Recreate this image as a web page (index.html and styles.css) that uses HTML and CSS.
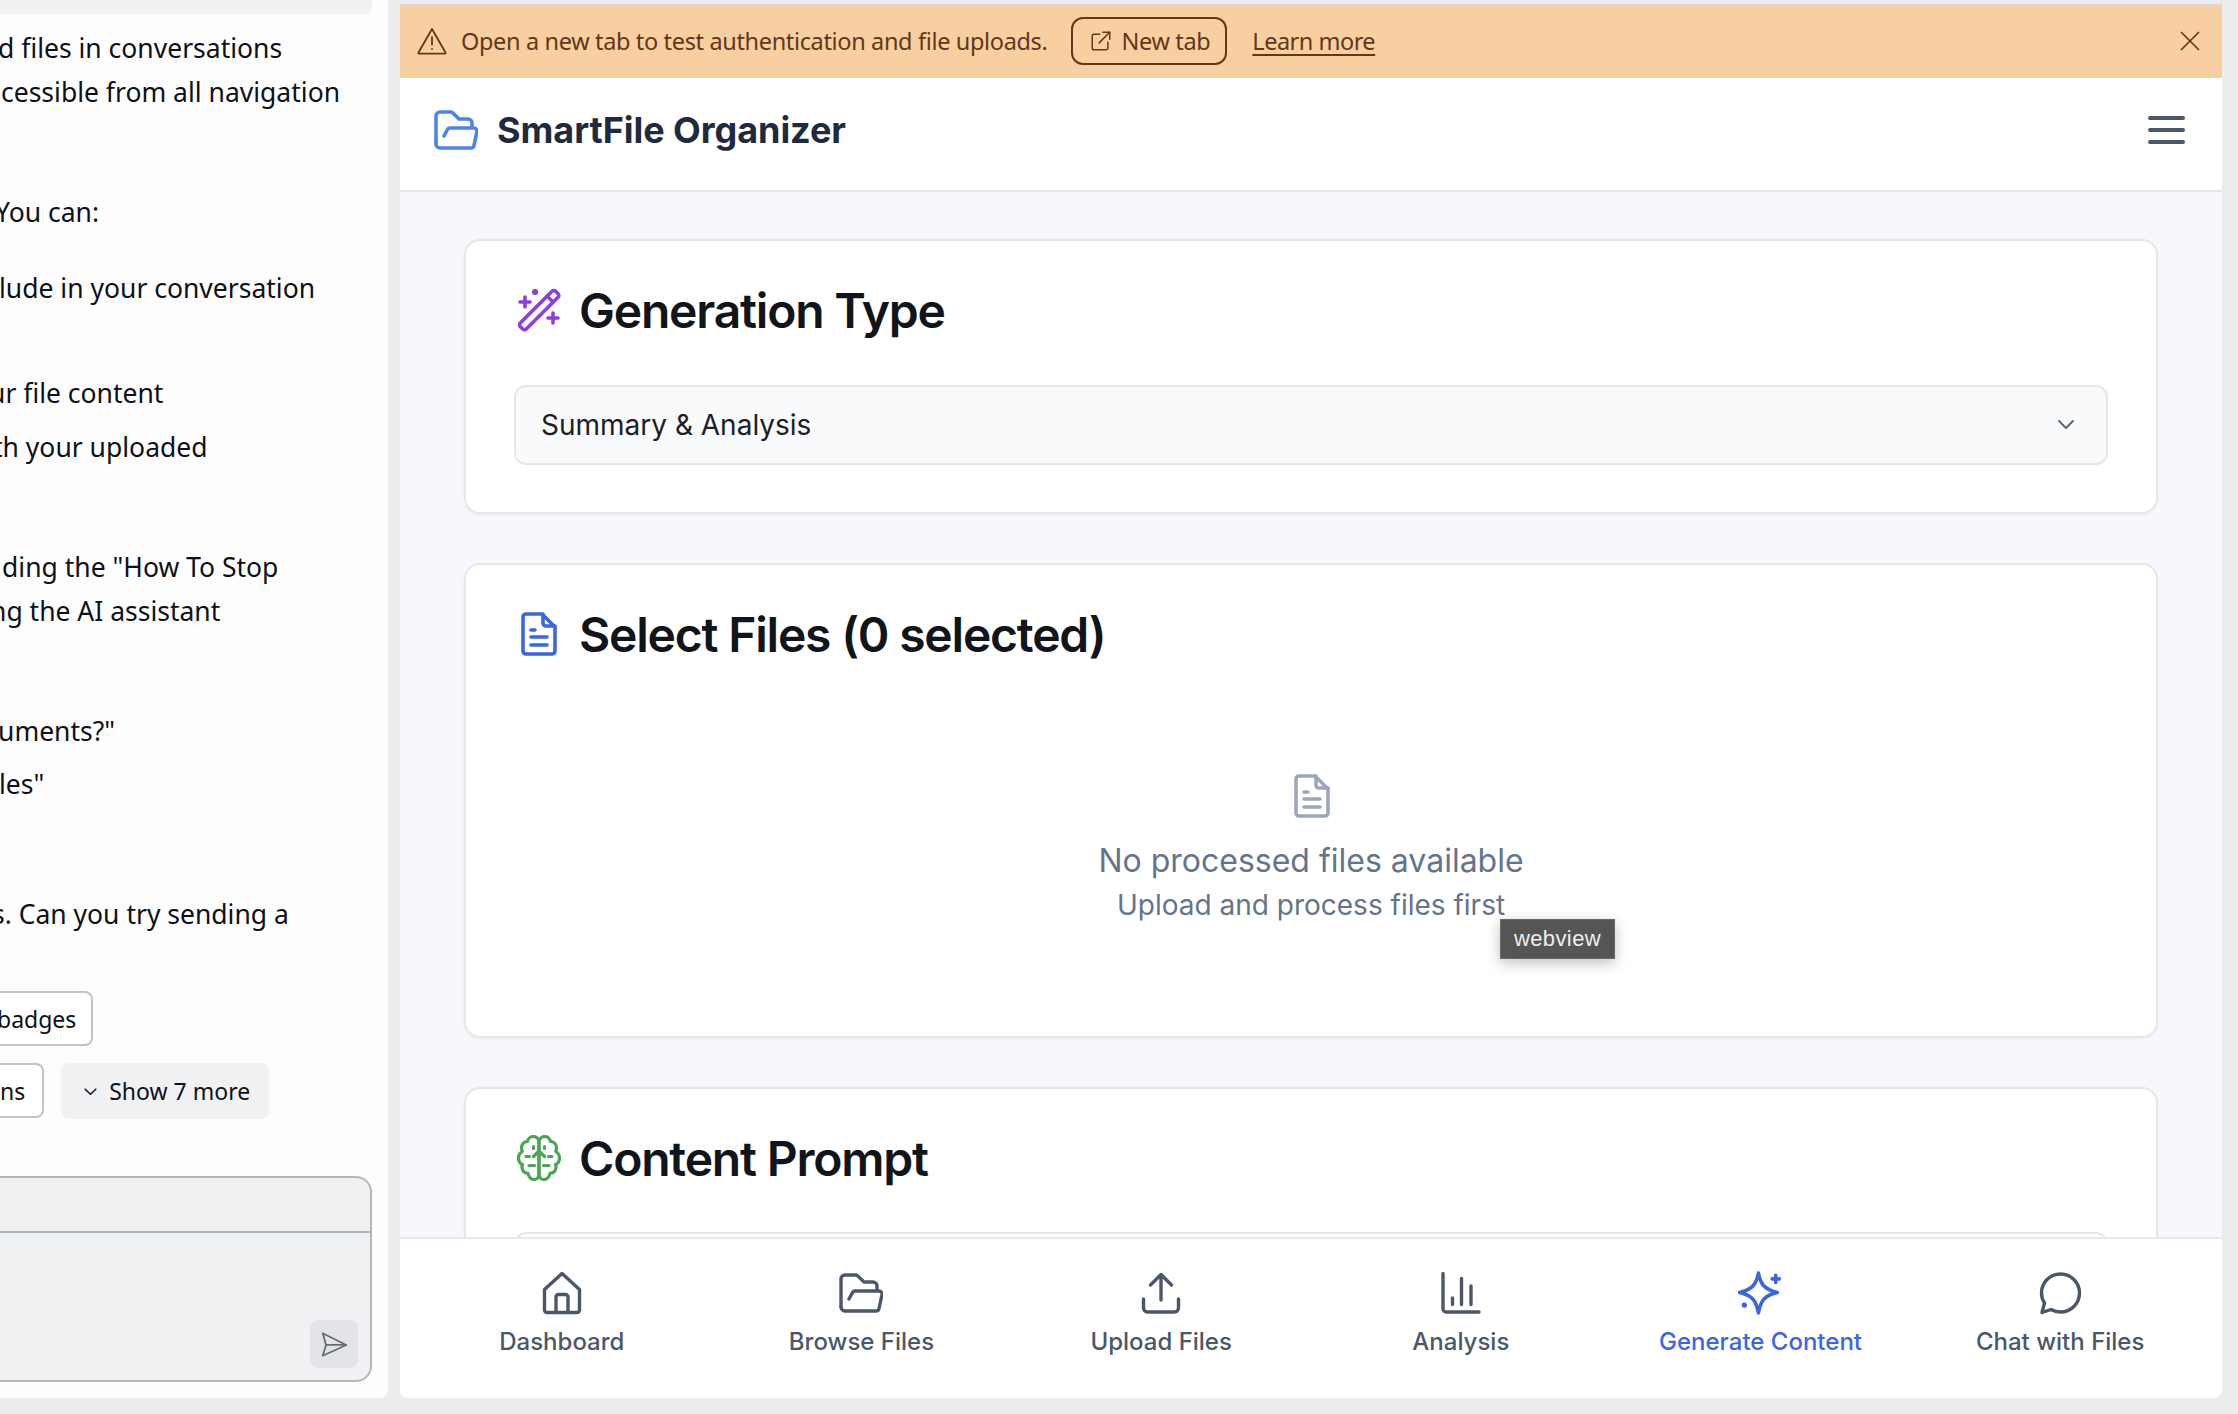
FILE: index.html
```html
<!DOCTYPE html>
<html lang="en">
<head>
<meta charset="utf-8">
<title>SmartFile Organizer</title>
<link rel="stylesheet" href="styles.css">
</head>
<body>
<div class="app">
  <aside class="assistant">
    <div class="top-strip"></div>
    <p class="line l1">d files in conversations</p>
    <p class="line l2">cessible from all navigation</p>
    <p class="line l3">You can:</p>
    <p class="line l4">lude in your conversation</p>
    <p class="line l5">ur file content</p>
    <p class="line l6">th your uploaded</p>
    <p class="line l7">ding the "How To Stop</p>
    <p class="line l8">ng the AI assistant</p>
    <p class="line l9">uments?"</p>
    <p class="line l10">les"</p>
    <p class="line l11">s. Can you try sending a</p>
    <div class="chip-row r1"><span class="chip">badges</span></div>
    <div class="chip-row r2">
      <span class="chip">ns</span>
      <span class="more">
        <svg class="more-icon" viewBox="0 0 16 16" fill="none" stroke="currentColor" stroke-width="1.4" stroke-linecap="round" stroke-linejoin="round"><path d="M3 5.8 8 10.6l5-4.8"/></svg>
        Show 7 more
      </span>
    </div>
    <div class="composer">
      <div class="composer-head"></div>
      <div class="composer-body">
        <span class="send">
          <svg viewBox="0 0 32 32" fill="none" stroke="currentColor" stroke-width="1.9" stroke-linejoin="round" stroke-linecap="round"><path d="M4 4.5 29 17 4 28.5 7.5 17Z"/><path d="M7.5 17H29"/></svg>
        </span>
      </div>
    </div>
  </aside>

  <main class="preview">
    <div class="banner">
      <svg class="warn" viewBox="0 0 30 28" fill="none" stroke="currentColor" stroke-width="1.8" stroke-linecap="round" stroke-linejoin="round"><path d="M15 2 28.5 25.500a.8.8 0 0 1-.7 1.200H2.200a.8.8 0 0 1-.7-1.200Z"/><path d="M15 10v7.500"/><path d="M15 22v.1"/></svg>
      <span class="banner-text">Open a new tab to test authentication and file uploads.</span>
      <span class="newtab">
        <svg viewBox="2 2 16 16" fill="none" stroke="currentColor" stroke-width="1.2" stroke-linecap="round" stroke-linejoin="round"><path d="M9 4.5H4.5A1.5 1.5 0 0 0 3 6v9.5A1.5 1.5 0 0 0 4.5 17H14a1.5 1.5 0 0 0 1.5-1.5V11"/><path d="M11.5 3H17v5.500"/><path d="M17 3 8.500 11.500"/></svg>
        New tab
      </span>
      <a class="learn">Learn more</a>
      <svg class="close" viewBox="0 0 20 20" fill="none" stroke="currentColor" stroke-width="1.7" stroke-linecap="round"><path d="M1.5 1.5 18.5 18.5M18.5 1.5 1.500 18.5"/></svg>
    </div>

    <header class="topbar">
      <div class="brand">
        <svg class="brand-icon" viewBox="0 -3 44 44" fill="none" stroke="currentColor" stroke-width="3.6" stroke-linecap="round" stroke-linejoin="round"><path d="M2 33V5a4 4 0 0 1 4-4h10.5a3 3 0 0 1 2.200.9L25 8h9a4 4 0 0 1 4 4v4"/><path d="M10 25l3.500-6.500a3 3 0 0 1 2.800-1.500H40a3 3 0 0 1 3 3.500l-3 14A3 3 0 0 1 37 37H6a4 4 0 0 1-4-4"/></svg>
        <span class="brand-name">SmartFile Organizer</span>
      </div>
      <svg class="burger" viewBox="0 0 37 28" fill="none" stroke="currentColor" stroke-width="4" stroke-linecap="round"><path d="M2 2h33M2 14h33M2 26h33"/></svg>
    </header>

    <div class="content">
      <section class="card card-gen">
        <h2 class="card-title">
          <svg class="title-icon purple" viewBox="0 0 44 44" fill="none" stroke="currentColor" stroke-width="3.6" stroke-linecap="round" stroke-linejoin="round"><rect x="-3" y="18" width="50" height="8.500" rx="2.500" transform="rotate(-45 22 22)"/><path d="m30 8 6 6"/><path d="M3 14h10M8 9v10M31 30h10M36 25v10"/><path stroke-width="6" d="M18 4h.1"/></svg>
          Generation Type
        </h2>
        <div class="select">
          <span>Summary &amp; Analysis</span>
          <svg class="chevron" viewBox="0 0 20 20" fill="none" stroke="currentColor" stroke-width="1.8" stroke-linecap="round" stroke-linejoin="round"><path d="m3 6 7 7 7-7"/></svg>
        </div>
      </section>

      <section class="card card-files">
        <h2 class="card-title">
          <svg class="title-icon blue" viewBox="-4 0 44 44" fill="none" stroke="currentColor" stroke-width="3.6" stroke-linecap="round" stroke-linejoin="round"><path d="M21 2H5A3 3 0 0 0 2 5v34a3 3 0 0 0 3 3h26a3 3 0 0 0 3-3V15Z"/><path d="M22 2v9a3 3 0 0 0 3 3h9"/><path d="M10 18h4M10 25h16M10 33h16"/></svg>
          Select Files (0 selected)
        </h2>
        <div class="empty">
          <svg class="empty-icon" viewBox="0 0 36 44" fill="none" stroke="currentColor" stroke-width="3.6" stroke-linecap="round" stroke-linejoin="round"><path d="M21 2H5A3 3 0 0 0 2 5v34a3 3 0 0 0 3 3h26a3 3 0 0 0 3-3V15Z"/><path d="M22 2v9a3 3 0 0 0 3 3h9"/><path d="M10 18h4M10 25h16M10 33h16"/></svg>
          <p class="empty-main">No processed files available</p>
          <p class="empty-sub">Upload and process files first</p>
        </div>
      </section>

      <section class="card card-prompt">
        <h2 class="card-title">
          <svg class="title-icon green" viewBox="0 0 44 46" fill="none" stroke="currentColor" stroke-width="3.200" stroke-linecap="round" stroke-linejoin="round">
            <g id="brain-half"><path d="M22 7c0-3-2.500-5.500-5.500-5.500-3 0-5.500 2-6 5-3.500 0-6 3-6 6.500 0 1.300.3 2.300.8 3.300C2.800 18 1.500 20.300 1.500 23c0 3 1.500 5.500 4 6.700-.5 1-.7 2-.5 3.100.5 3.400 3 5.500 6 5.500.5 3.500 3 6.200 6 6.200 3 0 5-2.500 5-5.500Z"/><path d="M22 16l-5.500 5.500M9 21.500h3.500M16.500 11.500v2M12 30.500h5.500"/></g>
            <use href="#brain-half" transform="matrix(-1 0 0 1 44 0)"/>
          </svg>
          Content Prompt
        </h2>
        <div class="prompt-box"></div>
      </section>
    </div>

    <nav class="bottom-nav">
      <div class="nav-item">
        <svg viewBox="0 0 44 44" fill="none" stroke="currentColor" stroke-width="3.4" stroke-linecap="round" stroke-linejoin="round"><path d="M4.500 18.500 22 2.500l17.500 16V39a2.500 2.500 0 0 1-2.500 2.500H7A2.500 2.500 0 0 1 4.500 39Z"/><path d="M16 41V26a2.500 2.500 0 0 1 2.500-2.500h7A2.500 2.500 0 0 1 28 26v15"/></svg>
        <span>Dashboard</span>
      </div>
      <div class="nav-item">
        <svg viewBox="0 -3 44 44" fill="none" stroke="currentColor" stroke-width="3.4" stroke-linecap="round" stroke-linejoin="round"><path d="M2 33V5a4 4 0 0 1 4-4h10.5a3 3 0 0 1 2.200.9L25 8h9a4 4 0 0 1 4 4v4"/><path d="M10 25l3.500-6.500a3 3 0 0 1 2.800-1.500H40a3 3 0 0 1 3 3.500l-3 14A3 3 0 0 1 37 37H6a4 4 0 0 1-4-4"/></svg>
        <span>Browse Files</span>
      </div>
      <div class="nav-item">
        <svg viewBox="0 0 44 44" fill="none" stroke="currentColor" stroke-width="3.4" stroke-linecap="round" stroke-linejoin="round"><path d="M22 29V3.500M11.500 14 22 3.500 32.500 14"/><path d="M4.500 28v9a4 4 0 0 0 4 4h27a4 4 0 0 0 4-4v-9"/></svg>
        <span>Upload Files</span>
      </div>
      <div class="nav-item">
        <svg viewBox="0 0 44 44" fill="none" stroke="currentColor" stroke-width="3.4" stroke-linecap="round" stroke-linejoin="round"><path d="M4 2.500V38a3 3 0 0 0 3 3h33"/><path d="M13.500 27v6.500M22.500 7.500v26M32 15v18.500"/></svg>
        <span>Analysis</span>
      </div>
      <div class="nav-item active">
        <svg viewBox="0 1 42 42" fill="none" stroke="currentColor" stroke-width="3.4" stroke-linecap="round" stroke-linejoin="round"><path d="M19.500 3c2 10 5 15.500 18 18.500-13 3-16 8.500-18 19.500-2-11-5-16.500-18-19.500 13-3 16-8.500 18-18.500Z"/><path d="M36 5v7M32.500 8.500h7"/><path stroke-width="5" d="M6 33.500h.1"/></svg>
        <span>Generate Content</span>
      </div>
      <div class="nav-item">
        <svg viewBox="0 0 44 44" fill="none" stroke="currentColor" stroke-width="3.4" stroke-linecap="round" stroke-linejoin="round"><path d="M4 41.500l2.500-9.500C4.500 29 3.500 25.500 3.500 22c0-10.500 8.500-19 19-19s19 8.500 19 19-8.500 19-19 19c-3.500 0-6.500-.8-9.500-2.500Z"/></svg>
        <span>Chat with Files</span>
      </div>
    </nav>

    <div class="tooltip">webview</div>
  </main>
</div>
</body>
</html>
```
FILE: styles.css
```css
* { box-sizing: border-box; }
html, body { margin: 0; height: 100%; }
body { background: #ebecee; font-family: "Inter", "Liberation Sans", sans-serif; overflow: hidden; }
.app { display: flex; height: 1398px; gap: 12px; padding-right: 16px; }

/* left panel */
.assistant { width: 388px; flex: none; height: 100%; background: #fdfdfd; border-bottom-right-radius: 8px; overflow: hidden; font-family: "Noto Sans", "Liberation Sans", sans-serif; color: #0e1116; }
.top-strip { width: 372px; height: 14px; background: #f0f1f3; border-bottom-right-radius: 8px; }
.line { margin: 0; height: 40px; font-size: 26.5px; line-height: 40px; white-space: nowrap; }
.l1 { margin-top: 14px; text-indent: -2px; }
.l2 { margin-top: 4px; text-indent: 1px; }
.l3 { margin-top: 80px; text-indent: -5px; }
.l4 { margin-top: 36px; text-indent: -1px; }
.l5 { margin-top: 65px; text-indent: -11px; }
.l6 { margin-top: 14px; text-indent: -7px; }
.l7 { margin-top: 80px; text-indent: 2px; }
.l8 { margin-top: 4px; text-indent: -10px; }
.l9 { margin-top: 80px; text-indent: -2px; }
.l10 { margin-top: 13px; text-indent: -1px; }
.l11 { margin-top: 90px; text-indent: -8px; }
.chip-row { display: flex; gap: 17px; font-size: 23px; }
.r1 { margin-top: 57px; }
.r2 { margin-top: 17px; }
.chip { height: 55px; padding: 0 17px 0 0; display: flex; align-items: center; border: 2px solid #c1c5c9; border-left: 0; border-radius: 0 8px 8px 0; background: #fff; }
.r1 .chip { margin-left: -3px; padding-right: 15px; }
.more { height: 56px; width: 208px; display: flex; align-items: center; gap: 10px; padding-left: 21px; background: #f0f1f3; border-radius: 8px; }
.more-icon { width: 17px; height: 17px; }
.composer { margin-top: 57px; width: 372px; height: 206px; border: 2px solid #b4b7ba; border-left: 0; border-radius: 0 16px 16px 0; background: #f0f1f3; display: flex; flex-direction: column; }
.composer-head { height: 55px; flex: none; border-bottom: 2px solid #b0b3b6; }
.composer-body { flex: 1; display: flex; align-items: flex-end; justify-content: flex-end; padding: 0 12px 12px 0; }
.send { width: 48px; height: 48px; border-radius: 8px; background: #e3e4e7; color: #686c74; display: flex; align-items: center; justify-content: center; }
.send svg { width: 30px; height: 30px; }

/* right panel */
.preview { position: relative; flex: 1; min-width: 0; margin-top: 4px; background: #f8f8fc; border-top: 2px solid #d6d8dc; border-radius: 0 0 8px 8px; overflow: hidden; display: flex; flex-direction: column; }
.banner { flex: none; height: 72px; background: #f7cfa0; color: #62381a; display: flex; align-items: center; padding: 0 22px 2px 17px; font-family: "Noto Sans", "Liberation Sans", sans-serif; font-size: 23.5px; letter-spacing: -.35px; }
.warn { width: 30px; height: 28px; flex: none; margin-right: 14px; }
.newtab { margin-left: 24px; height: 48px; padding: 0 15px 0 18px; display: flex; align-items: center; gap: 10px; border: 2px solid #62381a; border-radius: 12px; }
.newtab svg { width: 20px; height: 20px; }
.learn { margin-left: 25px; text-decoration: underline; text-decoration-thickness: 2px; text-underline-offset: 4px; letter-spacing: -.5px; }
.close { width: 20px; height: 20px; margin-left: auto; }

.topbar { flex: none; height: 114px; background: #fff; border-bottom: 2px solid #e3e5e9; display: flex; align-items: center; justify-content: space-between; padding: 0 37px 9px 34px; }
.brand { display: flex; align-items: center; gap: 19px; }
.brand-icon { width: 44px; height: 44px; color: #4d83ee; flex: none; }
.brand-name { font-size: 36px; font-weight: 700; letter-spacing: -.05px; color: #1f2a3c; }
.burger { width: 37px; height: 28px; color: #4b5768; margin-top: 1px; }

.content { flex: 1; min-height: 0; overflow: hidden; padding: 47px 64px 0 64px; display: flex; flex-direction: column; gap: 49px; }
.card { flex: none; background: #fff; border: 2px solid #e5e7eb; border-radius: 16px; padding: 0 48px; box-shadow: 0 1px 3px rgba(0,0,0,.05); }
.card-gen { height: 275px; }
.card-files { height: 475px; }
.card-prompt { height: 300px; }
.card-title { margin: 34px 0 0 3px; height: 70px; display: flex; align-items: center; gap: 18px; color: #111418; font-size: 48px; font-weight: 600; letter-spacing: -1.2px; }
.title-icon { width: 44px; height: 44px; flex: none; }
.purple { color: #8b3fe0; }
.blue { color: #3a66e6; }
.green { color: #4aa653; height: 46px; }
.select { margin-top: 40px; height: 80px; background: #f9fafb; border: 2px solid #e5e7eb; border-radius: 12px; display: flex; align-items: center; justify-content: space-between; padding: 0 30px 0 25px; font-size: 28px; color: #1c2026; }
.chevron { width: 20px; height: 20px; color: #5b6473; }
.empty { margin-top: 105px; display: flex; flex-direction: column; align-items: center; color: #64748b; }
.empty-icon { width: 36px; height: 44px; color: #9aa7bc; margin-left: 2px; }
.empty-main { margin: 21px 0 0; font-size: 32px; line-height: 44px; font-weight: 400; }
.empty-sub { margin: 0; font-size: 28px; line-height: 44px; }
.prompt-box { margin-top: 39px; height: 80px; border: 2px solid #e5e7eb; border-radius: 12px; }

.bottom-nav { flex: none; height: 161px; background: #fff; border-top: 2px solid #e5e9f0; display: grid; grid-template-columns: repeat(6, 1fr); padding: 0 12px; }
.nav-item { display: flex; flex-direction: column; align-items: center; padding-top: 32px; color: #4b5768; font-size: 24px; font-weight: 500; }
.nav-item svg { width: 44px; height: 44px; }
.nav-item span { margin-top: 11px; line-height: 32px; }
.nav-item.active { color: #3a66e6; }

.tooltip { position: absolute; left: 1100px; top: 913px; width: 115px; height: 40px; display: flex; align-items: center; justify-content: center; background: #555; border: 1px solid #6a6a6a; color: #eee; font-size: 22px; letter-spacing: .4px; box-shadow: 0 4px 14px rgba(0,0,0,.25); font-family: "Liberation Sans", sans-serif; }
```
